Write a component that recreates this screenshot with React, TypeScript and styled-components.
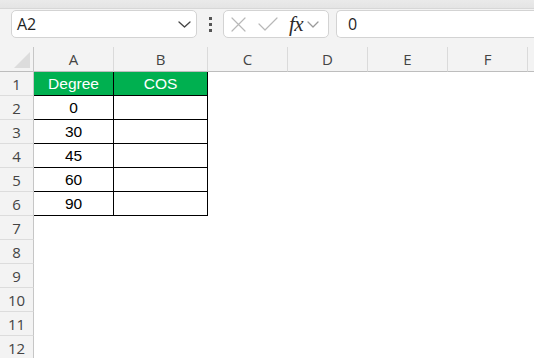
import React from 'react';
import styled, { createGlobalStyle } from 'styled-components';

const GlobalStyle = createGlobalStyle`
  html, body {
    margin: 0;
    padding: 0;
    background: #ffffff;
    overflow: hidden;
  }
  * {
    box-sizing: border-box;
  }
`;

// only A..F are visible in the window, G is cut by the edge
const COLUMNS = ['A', 'B', 'C', 'D', 'E', 'F', ''];
const COL_WIDTHS = [80, 94, 80, 80, 80, 80, 80];

const TABLE: string[][] = [
  ['Degree', 'COS'],
  ['0', ''],
  ['30', ''],
  ['45', ''],
  ['60', ''],
  ['90', ''],
];

const ROW_COUNT = 12;

function Chevron({ w, color }: { w: number; color: string }) {
  const h = Math.round(w * 0.55);
  return (
    <svg width={w} height={h} viewBox={`0 0 ${w} ${h}`} fill="none">
      <polyline
        points={`1,1 ${w / 2},${h - 1} ${w - 1},1`}
        stroke={color}
        strokeWidth="1.3"
        strokeLinecap="round"
        strokeLinejoin="round"
      />
    </svg>
  );
}

function CancelIcon() {
  return (
    <svg width="15" height="15" viewBox="0 0 15 15" fill="none">
      <path d="M1 1 L14 14 M14 1 L1 14" stroke="#b8b8b8" strokeWidth="1.2" strokeLinecap="round" />
    </svg>
  );
}

function EnterIcon() {
  return (
    <svg width="20" height="14" viewBox="0 0 20 14" fill="none">
      <path d="M1 7 L7 13 L19 1" stroke="#b8b8b8" strokeWidth="1.2" strokeLinecap="round" strokeLinejoin="round" />
    </svg>
  );
}

export default function App() {
  return (
    <Page>
      <GlobalStyle />
      <TopBand />
      <FormulaBar>
        <NameBox>
          <NameText>A2</NameText>
          <Chevron w={13} color="#444444" />
        </NameBox>
        <Dots>
          <Dot />
          <Dot />
          <Dot />
        </Dots>
        <FxBox>
          <CancelIcon />
          <EnterIcon />
          <FxText>fx</FxText>
          <Chevron w={12} color="#9a9a9a" />
        </FxBox>
        <FormulaInput>0</FormulaInput>
      </FormulaBar>

      <Sheet $cols={COL_WIDTHS}>
        <Corner>
          <CornerTriangle />
        </Corner>
        {COLUMNS.map((c, i) => (
          <ColHeader key={i}>{c}</ColHeader>
        ))}

        {Array.from({ length: ROW_COUNT }, (_, r) => (
          <React.Fragment key={r}>
            <RowHeader>{r + 1}</RowHeader>
            {COLUMNS.map((_c, ci) => {
              const value = TABLE[r]?.[ci];
              const inTable = value !== undefined;
              return (
                <Cell key={ci} $boxed={inTable} $head={r === 0 && inTable}>
                  {value}
                </Cell>
              );
            })}
          </React.Fragment>
        ))}
      </Sheet>
    </Page>
  );
}

const Page = styled.div`
  width: 534px;
  height: 358px;
  overflow: hidden;
  font-family: 'Liberation Sans', Arial, sans-serif;
  background: #ffffff;
`;

const TopBand = styled.div`
  height: 9px;
  background: linear-gradient(#eaeaea, #e4e4e4);
  border-bottom: 1px solid #d7d7d7;
`;

const FormulaBar = styled.div`
  height: 38px;
  background: #f3f3f3;
  display: flex;
  align-items: flex-start;
  padding: 1px 0 0 11px;
`;

const NameBox = styled.div`
  width: 186px;
  height: 28px;
  background: #ffffff;
  border: 1px solid #d3d3d3;
  border-radius: 5px;
  display: flex;
  align-items: center;
  justify-content: space-between;
  padding: 0 5px 0 5px;
`;

const NameText = styled.span`
  font-family: 'Open Sans', 'Liberation Sans', sans-serif;
  font-size: 16px;
  color: #1f1f1f;
`;

const Dots = styled.div`
  width: 26px;
  height: 28px;
  display: flex;
  flex-direction: column;
  align-items: center;
  justify-content: center;
  gap: 3px;
`;

const Dot = styled.span`
  width: 3px;
  height: 3px;
  background: #555555;
`;

const FxBox = styled.div`
  width: 106px;
  height: 28px;
  background: #ffffff;
  border: 1px solid #d3d3d3;
  border-radius: 5px;
  display: flex;
  align-items: center;
  gap: 12px;
  padding: 0 0 0 7px;
  margin-right: 7px;
`;

const FxText = styled.span`
  font-family: 'Liberation Serif', 'Times New Roman', serif;
  font-style: italic;
  font-size: 21px;
  line-height: 1;
  color: #2b2b2b;
  margin-left: -1px;
  margin-right: -8px;
  letter-spacing: -0.5px;
`;

const FormulaInput = styled.div`
  flex: 1;
  height: 28px;
  background: #ffffff;
  border: 1px solid #d3d3d3;
  border-right: none;
  border-radius: 5px 0 0 5px;
  display: flex;
  align-items: center;
  padding-left: 11px;
  font-family: 'Open Sans', 'Liberation Sans', sans-serif;
  font-size: 16px;
  color: #1f1f1f;
`;

const Sheet = styled.div<{ $cols: number[] }>`
  display: grid;
  grid-template-columns: 34px ${(p) => p.$cols.map((w) => `${w}px`).join(' ')};
  grid-template-rows: 25px repeat(${ROW_COUNT}, 24px);
`;

const Corner = styled.div`
  position: relative;
  background: #f3f3f3;
  border-right: 1px solid #c6c6c6;
  border-bottom: 1px solid #bdbdbd;
`;

const CornerTriangle = styled.div`
  position: absolute;
  right: 3px;
  bottom: 3px;
  width: 0;
  height: 0;
  border-left: 16px solid transparent;
  border-bottom: 16px solid #dcdcdc;
`;

const ColHeader = styled.div`
  background: #f3f3f3;
  border-right: 1px solid #dadada;
  border-bottom: 1px solid #bdbdbd;
  display: flex;
  align-items: center;
  justify-content: center;
  font-family: 'Open Sans', 'Liberation Sans', sans-serif;
  font-size: 15px;
  color: #444444;
`;

const RowHeader = styled.div`
  background: #f3f3f3;
  border-right: 1px solid #c6c6c6;
  border-bottom: 1px solid #dcdcdc;
  display: flex;
  align-items: center;
  justify-content: center;
  font-family: 'Open Sans', 'Liberation Sans', sans-serif;
  font-size: 15px;
  color: #444444;
`;

const Cell = styled.div<{ $boxed: boolean; $head: boolean }>`
  border-right: 1px solid ${(p) => (p.$boxed ? '#000000' : 'transparent')};
  border-bottom: 1px solid ${(p) => (p.$boxed ? '#000000' : 'transparent')};
  background: ${(p) => (p.$head ? '#00b050' : '#ffffff')};
  color: ${(p) => (p.$head ? '#ffffff' : '#000000')};
  display: flex;
  align-items: center;
  justify-content: center;
  font-size: 15.5px;
  padding-top: 1px;
`;
